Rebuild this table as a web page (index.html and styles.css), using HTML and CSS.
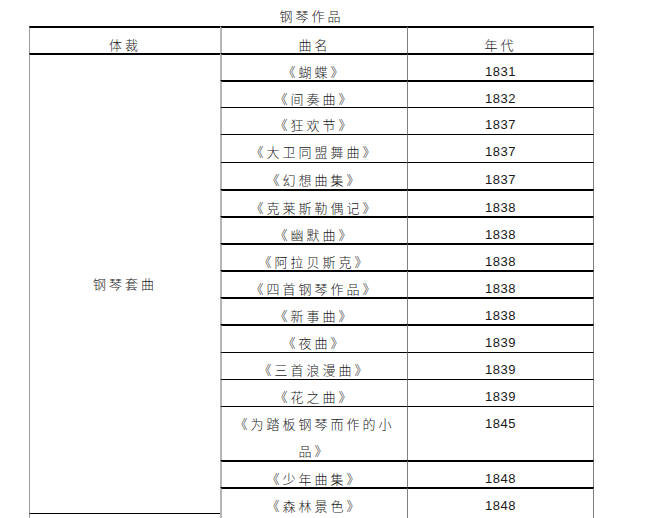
FILE: index.html
```html
<!DOCTYPE html>
<html lang="zh-CN">
<head>
<meta charset="utf-8">
<title>钢琴作品</title>
<link rel="stylesheet" href="styles.css">
</head>
<body>
<div class="title">钢琴作品</div>
<div class="tbl">
  <div class="c c1 tk">体裁</div>
  <div class="c c2 tk">曲名</div>
  <div class="c c3 tk">年代</div>
  <div class="c c1 tk genre">钢琴套曲</div>

  <div class="c c2 tk">《蝴蝶》</div><div class="c c3 tk num">1831</div>
  <div class="c c2 tk">《间奏曲》</div><div class="c c3 tk num">1832</div>
  <div class="c c2 tn">《狂欢节》</div><div class="c c3 tn num">1837</div>
  <div class="c c2 tn">《大卫同盟舞曲》</div><div class="c c3 tn num">1837</div>
  <div class="c c2 tn">《幻想曲集》</div><div class="c c3 tn num">1837</div>
  <div class="c c2 tk">《克莱斯勒偶记》</div><div class="c c3 tk num">1838</div>
  <div class="c c2 tk">《幽默曲》</div><div class="c c3 tk num">1838</div>
  <div class="c c2 tk">《阿拉贝斯克》</div><div class="c c3 tk num">1838</div>
  <div class="c c2 tk">《四首钢琴作品》</div><div class="c c3 tk num">1838</div>
  <div class="c c2 tk">《新事曲》</div><div class="c c3 tk num">1838</div>
  <div class="c c2 tk">《夜曲》</div><div class="c c3 tk num">1839</div>
  <div class="c c2 tn">《三首浪漫曲》</div><div class="c c3 tn num">1839</div>
  <div class="c c2 tn">《花之曲》</div><div class="c c3 tn num">1839</div>
  <div class="c c2 tn">《为踏板钢琴而作的小<br>品》</div><div class="c c3 tn num">1845</div>
  <div class="c c2 tk">《少年曲集》</div><div class="c c3 tk num">1848</div>
  <div class="c c2 tk last">《森林景色》</div><div class="c c3 tk num last">1848</div>

  <div class="c c1 tn foot"></div>
</div>
</body>
</html>
```

FILE: styles.css
```css
html, body {
  margin: 0;
  padding: 0;
  background: #ffffff;
  overflow: hidden;
}

body {
  font-family: "Noto Sans CJK SC", "Liberation Sans", sans-serif;
  font-size: 13px;
  font-weight: 300;
  color: #1a1a1a;
  width: 652px;
  height: 518px;
}

.title {
  width: 565px;
  margin-left: 29px;
  height: 26px;
  box-sizing: border-box;
  padding-top: 6px;
  line-height: 20px;
  text-align: center;
  letter-spacing: 3px;
}

.tbl {
  display: grid;
  margin-left: 29px;
  grid-template-columns: 191px 187px 187px;
  grid-template-rows: 27px repeat(13, 27.15px) 54px 27px 26px 30px;
}

.c {
  box-sizing: border-box;
  text-align: center;
  padding-top: 3px;
  line-height: 27px;
  letter-spacing: 3px;
  white-space: nowrap;
  overflow: visible;
}

.c1 {
  grid-column: 1;
  border-left: 1px solid #9c9c9c;
}

.c2 {
  grid-column: 2;
  border-left: 2px solid #b6b6b6;
}

.c3 {
  grid-column: 3;
  border-left: 1px solid #808080;
  border-right: 1px solid #808080;
}

.tk {
  border-top: 2px solid #000000;
}

.tn {
  border-top: 1px solid #000000;
}

.num {
  font-family: "Liberation Sans", Arial, sans-serif;
  font-weight: 400;
  letter-spacing: 0.5px;
}

.genre {
  grid-row: 2 / 18;
  display: flex;
  align-items: center;
  justify-content: center;
  padding-top: 0;
}

.last {
  grid-row: span 2;
}

.foot {
  grid-row: 18;
}
```
